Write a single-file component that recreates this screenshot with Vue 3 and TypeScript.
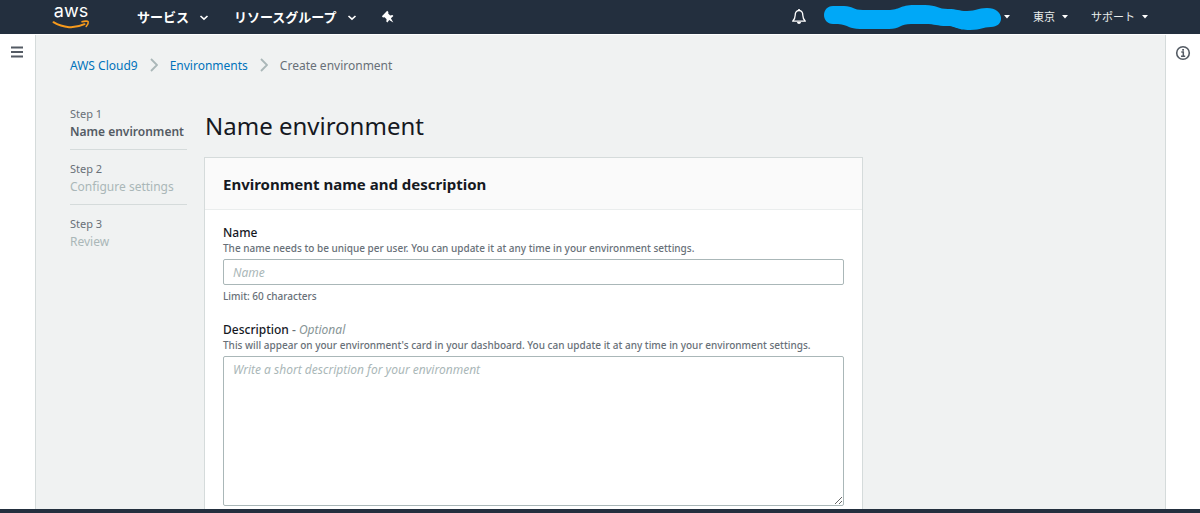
<script setup lang="ts">
import { ref } from 'vue'

interface Step {
  label: string
  title: string
  active: boolean
}

const steps: Step[] = [
  { label: 'Step 1', title: 'Name environment', active: true },
  { label: 'Step 2', title: 'Configure settings', active: false },
  { label: 'Step 3', title: 'Review', active: false },
]

const name = ref('')
const description = ref('')
</script>

<template>
  <div class="page">
    <header class="topbar">
      <a class="logo" href="#" aria-label="AWS home">
        <span class="logo-text">aws</span>
        <svg class="smile" width="38" height="10" viewBox="0 0 38 10" aria-hidden="true">
          <path d="M1.500 2.200C11 8.200 23 8.700 32.500 4.200" fill="none" stroke="#f79a1c" stroke-width="2" stroke-linecap="round" />
          <path d="M30 1.800C32.500 0.900 35.800 0.900 36.200 1.800C36.500 3 35.400 5.200 34.200 6.500" fill="none" stroke="#f79a1c" stroke-width="1.600" stroke-linecap="round" />
        </svg>
      </a>
      <button class="menu services" type="button">
        サービス
        <svg width="10" height="8" viewBox="0 0 10 8" aria-hidden="true"><path d="M1.500 3L5 6.200L8.500 3" fill="none" stroke="#fff" stroke-width="1.600" /></svg>
      </button>
      <button class="menu groups" type="button">
        リソースグループ
        <svg width="10" height="8" viewBox="0 0 10 8" aria-hidden="true"><path d="M1.500 3L5 6.200L8.500 3" fill="none" stroke="#fff" stroke-width="1.600" /></svg>
      </button>
      <button class="pin" type="button" aria-label="Pin">
        <svg width="14" height="14" viewBox="0 0 14 14" aria-hidden="true">
          <path d="M6.200 0.800L7.400 2L7.200 3.500L9.200 5.500L11.400 4.900L12.400 6L9.900 8.300L12.300 12.400L8.200 10L6.400 12.600L5.300 11.500L5.600 9.200L3.600 7.200L2 7.400L0.900 6.300Z" fill="#fff" />
        </svg>
      </button>
      <button class="bell" type="button" aria-label="Notifications">
        <svg width="16" height="18" viewBox="0 0 16 18" aria-hidden="true">
          <path d="M8 2.500C5 2.500 4.200 5 4.200 7.200C4.200 10.500 3.300 11.500 1.700 13.200H14.300C12.700 11.500 11.800 10.500 11.800 7.200C11.800 5 11 2.500 8 2.500Z" fill="none" stroke="#fff" stroke-width="1.300" stroke-linejoin="round" />
          <path d="M8 1V2.500" stroke="#fff" stroke-width="1.600" />
          <path d="M6 14H10C10 16.600 6 16.600 6 14Z" fill="#fff" />
        </svg>
      </button>
      <button class="account" type="button" aria-label="Account">
        <svg width="177" height="27" viewBox="0 0 177 27" aria-hidden="true">
          <path d="M9 1H20C29 1 29 5 39 5H64C76 5 76 0 90 0H101C113 0 114 4 124 4C134 4 134 6 143 6C153 6 153 3 163 3C181 3 181 22 167 22C158 22 158 25 146 25C132 25 132 21 123 21C112 21 112 19 101 19H87C76 19 76 24 65 24H36C25 24 25 20 14 19H9C-3 19 -3 1 9 1Z" fill="#00a8f7" transform="translate(0 1)" />
        </svg>
        <svg width="8" height="6" viewBox="0 0 8 6" aria-hidden="true"><path d="M1 1H7L4 4.500Z" fill="#fff" /></svg>
      </button>
      <button class="small region" type="button">
        東京
        <svg width="8" height="6" viewBox="0 0 8 6" aria-hidden="true"><path d="M1 1H7L4 4.500Z" fill="#fff" /></svg>
      </button>
      <button class="small support" type="button">
        サポート
        <svg width="8" height="6" viewBox="0 0 8 6" aria-hidden="true"><path d="M1 1H7L4 4.500Z" fill="#fff" /></svg>
      </button>
    </header>

    <div class="body">
      <aside class="rail rail-left">
        <button type="button" aria-label="Open navigation">
          <svg width="14" height="14" viewBox="0 0 14 14" aria-hidden="true"><path d="M1 2.500H13M1 7H13M1 11.500H13" stroke="#545b64" stroke-width="2" /></svg>
        </button>
      </aside>

      <main class="main">
        <nav class="crumbs" aria-label="Breadcrumb">
          <a href="#">AWS Cloud9</a>
          <svg width="8" height="14" viewBox="0 0 8 14" aria-hidden="true"><path d="M1 1L7 7L1 13" fill="none" stroke="#aab7b8" stroke-width="1.800" /></svg>
          <a href="#">Environments</a>
          <svg width="8" height="14" viewBox="0 0 8 14" aria-hidden="true"><path d="M1 1L7 7L1 13" fill="none" stroke="#aab7b8" stroke-width="1.800" /></svg>
          <span>Create environment</span>
        </nav>

        <div class="wizard">
          <ol class="steps">
            <li v-for="step in steps" :key="step.label" :class="{ active: step.active }">
              <span class="step-label">{{ step.label }}</span>
              <span class="step-title">{{ step.title }}</span>
            </li>
          </ol>

          <div class="content">
            <h1>Name environment</h1>
            <section class="card">
              <div class="card-head"><h2>Environment name and description</h2></div>
              <form class="card-body" @submit.prevent>
                <div class="field">
                  <label for="env-name">Name</label>
                  <p id="name-hint">The name needs to be unique per user. You can update it at any time in your environment settings.</p>
                  <input id="env-name" v-model="name" type="text" maxlength="60" placeholder="Name" aria-describedby="name-hint name-limit" />
                  <p id="name-limit" class="limit">Limit: 60 characters</p>
                </div>
                <div class="field">
                  <label for="env-desc">Description <span class="dash">-</span> <i>Optional</i></label>
                  <p id="desc-hint">This will appear on your environment's card in your dashboard. You can update it at any time in your environment settings.</p>
                  <textarea id="env-desc" v-model="description" placeholder="Write a short description for your environment" aria-describedby="desc-hint"></textarea>
                </div>
              </form>
            </section>
          </div>
        </div>
      </main>

      <aside class="rail rail-right">
        <button type="button" aria-label="Information">
          <svg width="16" height="16" viewBox="0 0 16 16" aria-hidden="true">
            <circle cx="8" cy="8" r="6.300" fill="none" stroke="#545b64" stroke-width="1.600" />
            <path d="M6.300 7H8.300V11M6 11.200H10.200" fill="none" stroke="#545b64" stroke-width="1.500" />
            <rect x="7.200" y="4" width="1.800" height="1.700" fill="#545b64" />
          </svg>
        </button>
      </aside>
    </div>
    <footer class="footer"></footer>
  </div>
</template>

<style>
body {
  margin: 0;
}
</style>

<style scoped>
.page {
  display: flex;
  flex-direction: column;
  height: 100vh;
  overflow: hidden;
  background: #fff;
  color: #16191f;
  font-family: "Noto Sans", "Noto Sans CJK JP", sans-serif;
  font-size: 12px;
}
* {
  box-sizing: border-box;
}
button {
  display: flex;
  align-items: center;
  padding: 0;
  border: 0;
  background: none;
  color: #fff;
  font: inherit;
  white-space: nowrap;
  cursor: pointer;
}
svg {
  display: block;
  flex: none;
}
.topbar {
  display: flex;
  flex: none;
  align-items: center;
  height: 34px;
  padding: 0 51px 0 52px;
  background: #232f3e;
}
.logo {
  display: flex;
  flex-direction: column;
  width: 38px;
  height: 34px;
  margin-right: 47px;
  padding-top: 1px;
  color: #fff;
  text-decoration: none;
}
.logo-text {
  font-family: Inter, sans-serif;
  font-size: 18px;
  font-weight: 400;
  line-height: 19px;
  text-align: center;
}
.menu {
  gap: 10px;
  font-size: 13px;
  font-weight: 700;
  line-height: 18px;
}
.groups {
  margin-left: 25px;
}
.pin {
  margin-left: 24px;
}
.bell {
  margin-left: auto;
}
.account {
  gap: 2px;
  margin-left: 17px;
}
.small {
  gap: 6px;
  color: #eaeded;
  font-size: 11px;
  line-height: 16px;
}
.region,
.support {
  margin-left: 22px;
}
.body {
  display: flex;
  flex: 1;
  min-height: 0;
  padding-top: 1px;
}
.rail {
  flex: none;
  width: 36px;
  padding-top: 10px;
}
.rail button {
  margin-left: 10px;
}
.rail-left {
  border-right: 1px solid #d5dbdb;
}
.rail-right {
  width: 35px;
  border-left: 1px solid #d5dbdb;
}
.rail-right button {
  margin-left: 9px;
}
.main {
  flex: 1;
  min-width: 0;
  padding: 20px 34px 0;
  overflow: hidden;
  background: #f0f2f2;
}
.crumbs {
  display: flex;
  align-items: center;
  gap: 12px;
  height: 20px;
  color: #687078;
}
.crumbs a {
  color: #0073bb;
  text-decoration: none;
}
.wizard {
  display: flex;
  gap: 18px;
  max-width: 792px;
}
.steps {
  flex: none;
  width: 117px;
  margin: 0;
  padding: 30px 0 0;
  list-style: none;
}
.steps li {
  display: flex;
  flex-direction: column;
  height: 55px;
  line-height: 18px;
}
.steps li:not(:last-child)::after {
  height: 1px;
  margin-top: 8px;
  background: #d5dbdb;
  content: "";
}
.step-label {
  color: #687078;
  font-size: 11px;
}
.step-title {
  color: #aab7b8;
}
.active .step-title {
  color: #545b64;
  font-weight: 600;
}
.content {
  flex: 1;
  min-width: 0;
  padding-top: 35px;
}
h1 {
  margin: 0 0 16px;
  font-size: 24px;
  font-weight: 400;
  line-height: 32px;
}
.card {
  background: #fff;
  box-shadow: 0 0 0 1px #d5dbdb;
}
.card-head {
  padding: 14px 18px 13px;
  border-bottom: 1px solid #eaeded;
  background: #fafafa;
}
h2 {
  margin: 0;
  font-size: 15px;
  font-weight: 700;
  line-height: 24px;
}
.card-body {
  padding: 14px 18px;
}
.field {
  margin-bottom: 17px;
}
label {
  display: block;
  font-weight: 500;
  line-height: 17px;
}
.dash {
  color: #687078;
}
i {
  color: #879596;
  font-weight: 400;
}
p {
  margin: 0;
  color: #687078;
  font-size: 10px;
  font-weight: 500;
  line-height: 15px;
}
.limit {
  margin-top: 4px;
}
input,
textarea {
  display: block;
  width: 100%;
  margin-top: 3px;
  padding: 4px 9px;
  border: 1px solid #aab7b8;
  border-radius: 2px;
  background: #fff;
  color: #16191f;
  font: inherit;
  line-height: 18px;
}
input {
  height: 26px;
}
textarea {
  height: 150px;
}
input::placeholder,
textarea::placeholder {
  color: #aab7b8;
  font-style: italic;
  opacity: 1;
}
.footer {
  flex: none;
  height: 4px;
  background: #232f3e;
}
</style>
